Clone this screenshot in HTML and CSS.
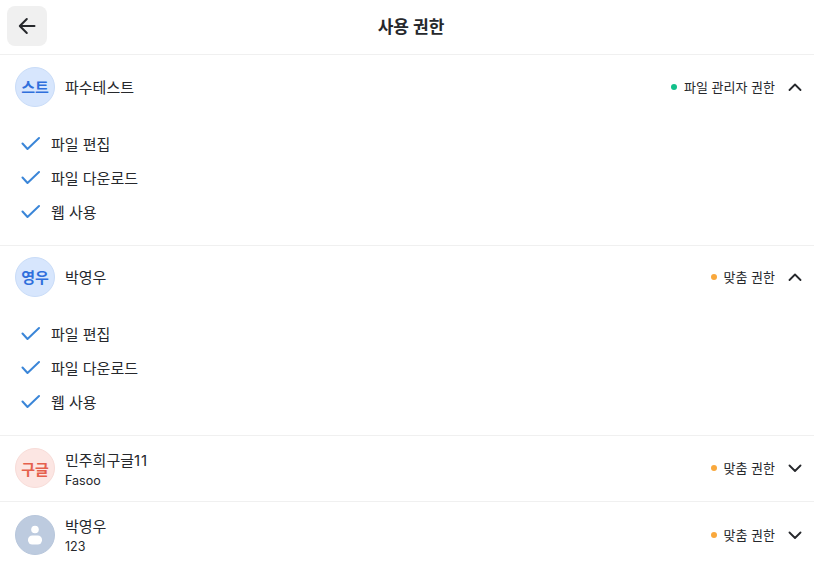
FILE: index.html
```html
<!DOCTYPE html>
<html lang="ko">
<head>
<meta charset="utf-8">
<title>사용 권한</title>
<link rel="stylesheet" href="styles.css">
</head>
<body>
<header class="top">
  <button class="back" aria-label="뒤로">
    <svg width="20" height="20" viewBox="0 0 20 20" fill="none" stroke="#26282c" stroke-width="2" stroke-linecap="round" stroke-linejoin="round"><path d="M17.5 10H3M9.8 3L2.8 10L9.8 17"/></svg>
  </button>
  <h1 class="title">사용 권한</h1>
</header>
<section class="user">
  <div class="row">
    <div class="avatar blue">스트</div>
    <div class="who"><div class="name">파수테스트</div></div>
    <div class="role"><i class="dot green"></i>파일 관리자 권한</div>
    <svg class="chev" width="14" height="8" viewBox="0 0 14 8" fill="none" stroke="#26282c" stroke-width="1.8" stroke-linecap="round" stroke-linejoin="round"><path d="M1.5 7L7 1.5L12.5 7"/></svg>
  </div>
  <ul class="perms">
    <li><svg class="check" width="20" height="15" viewBox="0 0 20 15" fill="none" stroke="#3b86d8" stroke-width="2" stroke-linecap="round" stroke-linejoin="round"><path d="M2.5 7.5L7.5 13L19 2"/></svg>파일 편집</li>
    <li><svg class="check" width="20" height="15" viewBox="0 0 20 15" fill="none" stroke="#3b86d8" stroke-width="2" stroke-linecap="round" stroke-linejoin="round"><path d="M2.5 7.5L7.5 13L19 2"/></svg>파일 다운로드</li>
    <li><svg class="check" width="20" height="15" viewBox="0 0 20 15" fill="none" stroke="#3b86d8" stroke-width="2" stroke-linecap="round" stroke-linejoin="round"><path d="M2.5 7.5L7.5 13L19 2"/></svg>웹 사용</li>
  </ul>
</section>
<section class="user">
  <div class="row">
    <div class="avatar blue">영우</div>
    <div class="who"><div class="name">박영우</div></div>
    <div class="role"><i class="dot orange"></i>맞춤 권한</div>
    <svg class="chev" width="14" height="8" viewBox="0 0 14 8" fill="none" stroke="#26282c" stroke-width="1.8" stroke-linecap="round" stroke-linejoin="round"><path d="M1.5 7L7 1.5L12.5 7"/></svg>
  </div>
  <ul class="perms">
    <li><svg class="check" width="20" height="15" viewBox="0 0 20 15" fill="none" stroke="#3b86d8" stroke-width="2" stroke-linecap="round" stroke-linejoin="round"><path d="M2.5 7.5L7.5 13L19 2"/></svg>파일 편집</li>
    <li><svg class="check" width="20" height="15" viewBox="0 0 20 15" fill="none" stroke="#3b86d8" stroke-width="2" stroke-linecap="round" stroke-linejoin="round"><path d="M2.5 7.5L7.5 13L19 2"/></svg>파일 다운로드</li>
    <li><svg class="check" width="20" height="15" viewBox="0 0 20 15" fill="none" stroke="#3b86d8" stroke-width="2" stroke-linecap="round" stroke-linejoin="round"><path d="M2.5 7.5L7.5 13L19 2"/></svg>웹 사용</li>
  </ul>
</section>
<section class="user">
  <div class="row">
    <div class="avatar red">구글</div>
    <div class="who"><div class="name">민주희구글<span class="num">11</span></div><div class="sub">Fasoo</div></div>
    <div class="role"><i class="dot orange"></i>맞춤 권한</div>
    <svg class="chev" width="14" height="8" viewBox="0 0 14 8" fill="none" stroke="#26282c" stroke-width="1.8" stroke-linecap="round" stroke-linejoin="round"><path d="M1.5 1.5L7 7L12.5 1.5"/></svg>
  </div>
</section>
<section class="user last">
  <div class="row">
    <div class="avatar gray">
      <svg width="16" height="22" viewBox="0 0 16 22" fill="#fff"><circle cx="8" cy="5.5" r="3.8"/><rect x="1" y="11.5" width="14" height="9" rx="4.2"/></svg>
    </div>
    <div class="who"><div class="name">박영우</div><div class="sub">123</div></div>
    <div class="role"><i class="dot orange"></i>맞춤 권한</div>
    <svg class="chev" width="14" height="8" viewBox="0 0 14 8" fill="none" stroke="#26282c" stroke-width="1.8" stroke-linecap="round" stroke-linejoin="round"><path d="M1.5 1.5L7 7L12.5 1.5"/></svg>
  </div>
</section>
</body>
</html>
```
FILE: styles.css
```css
* { box-sizing: border-box; }
html, body { margin: 0; padding: 0; }
body {
  width: 814px;
  height: 587px;
  overflow: hidden;
  background: #fff;
  color: #26282c;
  font-family: Inter, "Noto Sans CJK KR", sans-serif;
}
.top {
  height: 55px;
  display: flex;
  align-items: center;
  justify-content: center;
  padding-left: 8px;
  position: relative;
  border-bottom: 1px solid #f0f0f0;
}
.back {
  position: absolute;
  left: 7px;
  top: 6px;
  width: 40px;
  height: 40px;
  border: 0;
  border-radius: 8px;
  background: #f0f0f0;
  display: flex;
  align-items: center;
  justify-content: center;
  padding: 0;
}
.title { margin: 0; font-size: 17px; font-weight: 700; line-height: 24px; }
.user { border-bottom: 1px solid #f0f0f0; }
.user.last { border-bottom: 0; }
.row {
  height: 65px;
  display: flex;
  align-items: center;
  padding: 0 12px 2px 15px;
}
.user:nth-of-type(2) .row { padding-bottom: 4px; }
.user:nth-of-type(3) .row { padding-bottom: 1px; }
.user:nth-of-type(4) .row { padding-bottom: 0; }
.avatar {
  width: 40px;
  height: 40px;
  flex: none;
  border-radius: 50%;
  display: flex;
  align-items: center;
  justify-content: center;
  font-size: 15px;
  font-weight: 700;
  border: 1px solid;
  overflow: hidden;
}
.avatar.blue { background: #d7e6fd; border-color: #c9dcf8; color: #2f6fdc; }
.avatar.red { background: #fce6e3; border-color: #f8dcd8; color: #e5604d; }
.avatar.gray { background: #bdcbdf; border-color: #b8c7dc; }
.who { flex: 1; margin-left: 10px; min-width: 0; padding-top: 3px; }
.name { font-size: 15px; line-height: 20px; }
.num { letter-spacing: 1px; }
.sub { font-size: 12.5px; line-height: 16px; margin-top: 2px; }
.role {
  display: flex;
  align-items: center;
  font-size: 13px;
  line-height: 18px;
}
.dot { width: 6px; height: 6px; border-radius: 50%; margin-right: 7px; }
.dot.green { background: #12c08a; }
.dot.orange { background: #f9a83c; }
.chev { margin-left: 13px; flex: none; }
.perms { list-style: none; margin: 0; padding: 6px 0 17px 20px; }
.user:nth-of-type(2) .perms { padding-top: 5px; }
.perms li {
  height: 34px;
  display: flex;
  align-items: center;
  font-size: 15px;
}
.check { margin-right: 11px; flex: none; }
```
